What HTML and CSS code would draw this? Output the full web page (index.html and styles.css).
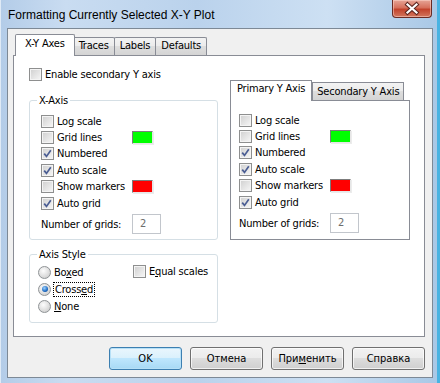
FILE: index.html
```
<!DOCTYPE html>
<html lang="en">
<head>
    <meta charset="UTF-8">
    <meta name="viewport" content="width=device-width, initial-scale=1.0">
    <title>Formatting Currently Selected X-Y Plot</title>
    <link rel="stylesheet" href="styles.css">
</head>
<body>
<div class="window">
    <div class="titlebar">
        <span class="title">Formatting Currently Selected X-Y Plot</span>
        <button class="close" type="button" aria-label="Close">
            <svg width="38" height="17" viewBox="0 0 38 17">
                <path d="M14.5 4.5 L23.5 12.5 M23.5 4.5 L14.5 12.5" stroke="#5b2620" stroke-width="4.2" stroke-linecap="square"/>
                <path d="M14.5 4.5 L23.5 12.5 M23.5 4.5 L14.5 12.5" stroke="#fff" stroke-width="2.2" stroke-linecap="square"/>
            </svg>
        </button>
    </div>

    <div class="client">
        <div class="tabstrip">
            <span class="tab active">X-Y Axes</span>
            <span class="tab">Traces</span>
            <span class="tab">Labels</span>
            <span class="tab">Defaults</span>
        </div>

        <div class="panel">
            <label class="check enable"><span class="box"></span><span>Enable secondary Y axis</span></label>

            <div class="cols">
                <div class="left">
                    <div class="group">
                        <div class="legend">X-Axis</div>
                        <div class="opts">
                            <div class="row"><label class="check"><span class="box"></span><span>Log scale</span></label></div>
                            <div class="row"><label class="check"><span class="box"></span><span>Grid lines</span></label><span class="swatch green"></span></div>
                            <div class="row"><label class="check"><span class="box"><svg viewBox="0 0 9 9"><path d="M1.2 4.6 L3.5 7.4 L7.8 1.3"/></svg></span><span>Numbered</span></label></div>
                            <div class="row"><label class="check"><span class="box"><svg viewBox="0 0 9 9"><path d="M1.2 4.6 L3.5 7.4 L7.8 1.3"/></svg></span><span>Auto scale</span></label></div>
                            <div class="row"><label class="check"><span class="box"></span><span>Show markers</span></label><span class="swatch red"></span></div>
                            <div class="row"><label class="check"><span class="box"><svg viewBox="0 0 9 9"><path d="M1.2 4.6 L3.5 7.4 L7.8 1.3"/></svg></span><span>Auto grid</span></label></div>
                            <div class="grids"><span class="grids-label">Number of grids:</span><span class="field">2</span></div>
                        </div>
                    </div>

                    <div class="group axis-style">
                        <div class="legend">Axis Style</div>
                        <div class="style-grid">
                            <label class="radio-row"><span class="radio"></span><span>Bo<u>x</u>ed</span></label>
                            <label class="check equal"><span class="box"></span><span>E<u>q</u>ual scales</span></label>
                            <label class="radio-row"><span class="radio on"></span><span class="focus">Cross<u>e</u>d</span></label>
                            <span></span>
                            <label class="radio-row"><span class="radio"></span><span><u>N</u>one</span></label>
                        </div>
                    </div>
                </div>

                <div class="right">
                    <div class="subtabs">
                        <span class="subtab active">Primary Y Axis</span>
                        <span class="subtab">Secondary Y Axis</span>
                    </div>
                    <div class="subpanel">
                        <div class="opts">
                            <div class="row"><label class="check"><span class="box"></span><span>Log scale</span></label></div>
                            <div class="row"><label class="check"><span class="box"></span><span>Grid lines</span></label><span class="swatch green"></span></div>
                            <div class="row"><label class="check"><span class="box"><svg viewBox="0 0 9 9"><path d="M1.2 4.6 L3.5 7.4 L7.8 1.3"/></svg></span><span>Numbered</span></label></div>
                            <div class="row"><label class="check"><span class="box"><svg viewBox="0 0 9 9"><path d="M1.2 4.6 L3.5 7.4 L7.8 1.3"/></svg></span><span>Auto scale</span></label></div>
                            <div class="row"><label class="check"><span class="box"></span><span>Show markers</span></label><span class="swatch red"></span></div>
                            <div class="row"><label class="check"><span class="box"><svg viewBox="0 0 9 9"><path d="M1.2 4.6 L3.5 7.4 L7.8 1.3"/></svg></span><span>Auto grid</span></label></div>
                            <div class="grids"><span class="grids-label">Number of grids:</span><span class="field">2</span></div>
                        </div>
                    </div>
                </div>
            </div>
        </div>

        <div class="buttons">
            <button type="button" class="btn default">OK</button>
            <button type="button" class="btn">Отмена</button>
            <button type="button" class="btn">При<u>м</u>енить</button>
            <button type="button" class="btn">Справка</button>
        </div>
    </div>
</div>
</body>
</html>
```

FILE: styles.css
```
body {
    margin: 0;
    padding: 0;
    background-color: #bcd4ee;
    font-family: "DejaVu Sans Condensed", "Liberation Sans", sans-serif;
    font-size: 11px;
    letter-spacing: -0.2px;
    color: #000;
}

.window {
    width: 440px;
    height: 383px;
    box-sizing: border-box;
    display: flex;
    flex-direction: column;
    background: linear-gradient(90deg, #b3cce8 0%, #c9dcf1 15%, #bad2ec 45%, #cde0f3 75%, #a9c8e6 100%);
    border-right: 3px solid #49b3e2;
    box-shadow: inset 1px 0 #dfeaf6;
}

/* title bar */
.titlebar {
    height: 28px;
    display: flex;
    align-items: flex-start;
    flex-shrink: 0;
}

.title {
    padding: 7px 0 0 8px;
    font-family: "Liberation Sans", sans-serif;
    font-size: 12px;
    letter-spacing: 0;
    line-height: 16px;
}

.close {
    box-sizing: border-box;
    margin-left: auto;
    margin-right: 5px;
    width: 40px;
    height: 18px;
    padding: 0;
    border: 1px solid #6a2b24;
    border-top: none;
    border-radius: 0 0 4px 4px;
    background: linear-gradient(#e6a597 0%, #d6705c 45%, #c2432c 55%, #d2765e 100%);
    box-shadow: inset 0 0 0 1px rgba(255, 220, 210, 0.5);
    display: flex;
    align-items: center;
    justify-content: center;
}

.close svg {
    display: block;
}

/* client area */
.client {
    margin: 0 4px 0 7px;
    height: 350px;
    box-sizing: border-box;
    border: 1px solid #7d8996;
    background-color: #f0f0f0;
    padding: 6px 7px 0 5px;
}

.tabstrip {
    display: flex;
    align-items: flex-end;
    height: 20px;
    padding-left: 2px;
}

.tab {
    height: 17px;
    line-height: 16px;
    padding: 0 5px;
    margin-left: -1px;
    border: 1px solid #898c95;
    border-bottom: none;
    background: linear-gradient(#f3f3f3, #ebebeb 50%, #dedede 50%, #d4d4d4);
    border-radius: 2px 2px 0 0;
}

.tab.active {
    position: relative;
    z-index: 1;
    height: 21px;
    line-height: 18px;
    margin: 0 -1px -1px 0;
    padding: 0 9px;
    background: #fff;
}

.panel {
    height: 282px;
    box-sizing: border-box;
    border: 1px solid #898c95;
    background-color: #fff;
    padding: 12px 15px 0 15px;
}

/* checkboxes */
.check {
    display: flex;
    align-items: center;
    gap: 3px;
    white-space: nowrap;
}

.box {
    width: 11px;
    height: 11px;
    flex-shrink: 0;
    border: 1px solid #8e8f8f;
    background: linear-gradient(135deg, #cfcfcf, #f7f7f7);
    box-shadow: inset 0 0 0 1px #f4f4f4;
    display: flex;
    align-items: center;
    justify-content: center;
}

.box svg {
    width: 9px;
    height: 9px;
    fill: none;
    stroke: #4a5d93;
    stroke-width: 1.7;
}

.enable {
    height: 13px;
}

.cols {
    display: grid;
    grid-template-columns: 189px 180px;
    column-gap: 12px;
    align-items: start;
}

/* group boxes */
.group {
    margin-top: 19px;
    border: 1px solid #d5dfe5;
    border-radius: 3px;
    padding: 0 8px 5px 11px;
}

.legend {
    width: max-content;
    margin: -7px 0 6px -4px;
    padding: 0 2px;
    line-height: 13px;
    background-color: #fff;
}

.row {
    height: 16.4px;
    display: flex;
    align-items: center;
}

.row .check {
    width: 91px;
}

.swatch {
    width: 19px;
    height: 11px;
    border: 1px solid;
    border-color: #7c7c7c #e6e6e6 #e6e6e6 #7c7c7c;
    box-shadow: 1px 1px 0 #ececec;
}

.swatch.green {
    background-color: #00ff00;
}

.swatch.red {
    background-color: #ff0000;
}

.grids {
    display: flex;
    align-items: center;
    margin-top: 3px;
}

.grids-label {
    width: 91px;
}

.field {
    width: 29px;
    height: 20px;
    box-sizing: border-box;
    border: 1px solid #c2c6cc;
    padding-left: 7px;
    line-height: 18px;
    color: #6d6d6d;
}

/* axis style */
.axis-style {
    margin-top: 14px;
    padding: 0 8px 6px 8px;
}

.axis-style .legend {
    margin: -7px 0 2px -1px;
}

.style-grid {
    display: grid;
    grid-template-columns: 95px 1fr;
    grid-auto-rows: 17.4px;
}

.radio-row {
    display: flex;
    align-items: center;
    gap: 3px;
}

.radio {
    width: 11px;
    height: 11px;
    flex-shrink: 0;
    border: 1px solid #8f9396;
    border-radius: 50%;
    background: radial-gradient(circle at 40% 35%, #fdfdfd, #d6d6d6 70%, #bcbcbc);
    display: flex;
    align-items: center;
    justify-content: center;
}

.radio.on::after {
    content: "";
    width: 6px;
    height: 6px;
    border-radius: 50%;
    background: radial-gradient(circle at 40% 35%, #9fd3ff, #1d6ac2 60%, #0b3f82);
}

.focus {
    outline: 1px dotted #000;
    padding: 0 1px;
}

.equal {
    margin-top: -2px;
}

/* secondary tab control */
.right {
    margin-top: -1px;
}

.subtabs {
    display: flex;
    align-items: flex-end;
    height: 20px;
}

.subtab {
    height: 17px;
    line-height: 17px;
    padding: 0 4px;
    border: 1px solid #898c95;
    border-bottom: none;
    background: linear-gradient(#f3f3f3, #ebebeb 50%, #dedede 50%, #d4d4d4);
}

.subtab.active {
    position: relative;
    z-index: 1;
    height: 20px;
    line-height: 16px;
    margin-bottom: -1px;
    padding: 0 6px;
    background: #fff;
}

.subpanel {
    height: 140px;
    box-sizing: border-box;
    border: 1px solid #898c95;
    padding: 11px 0 0 8px;
}

/* buttons */
.buttons {
    display: flex;
    justify-content: flex-end;
    gap: 8px;
    margin-top: 10px;
}

.btn {
    width: 73px;
    height: 23px;
    padding: 0;
    font: inherit;
    color: #000;
    border: 1px solid #707070;
    border-radius: 3px;
    background: linear-gradient(#f2f2f2, #ebebeb 50%, #dddddd 50%, #cfcfcf);
    box-shadow: inset 0 0 0 1px rgba(255, 255, 255, 0.7);
}

.btn.default {
    border-color: #3c7fb1;
    background: linear-gradient(#eaf6fd, #d9f0fc 50%, #bee6fd 50%, #a7d9f5);
    box-shadow: inset 0 0 0 1px #b6e0f7;
}
```
